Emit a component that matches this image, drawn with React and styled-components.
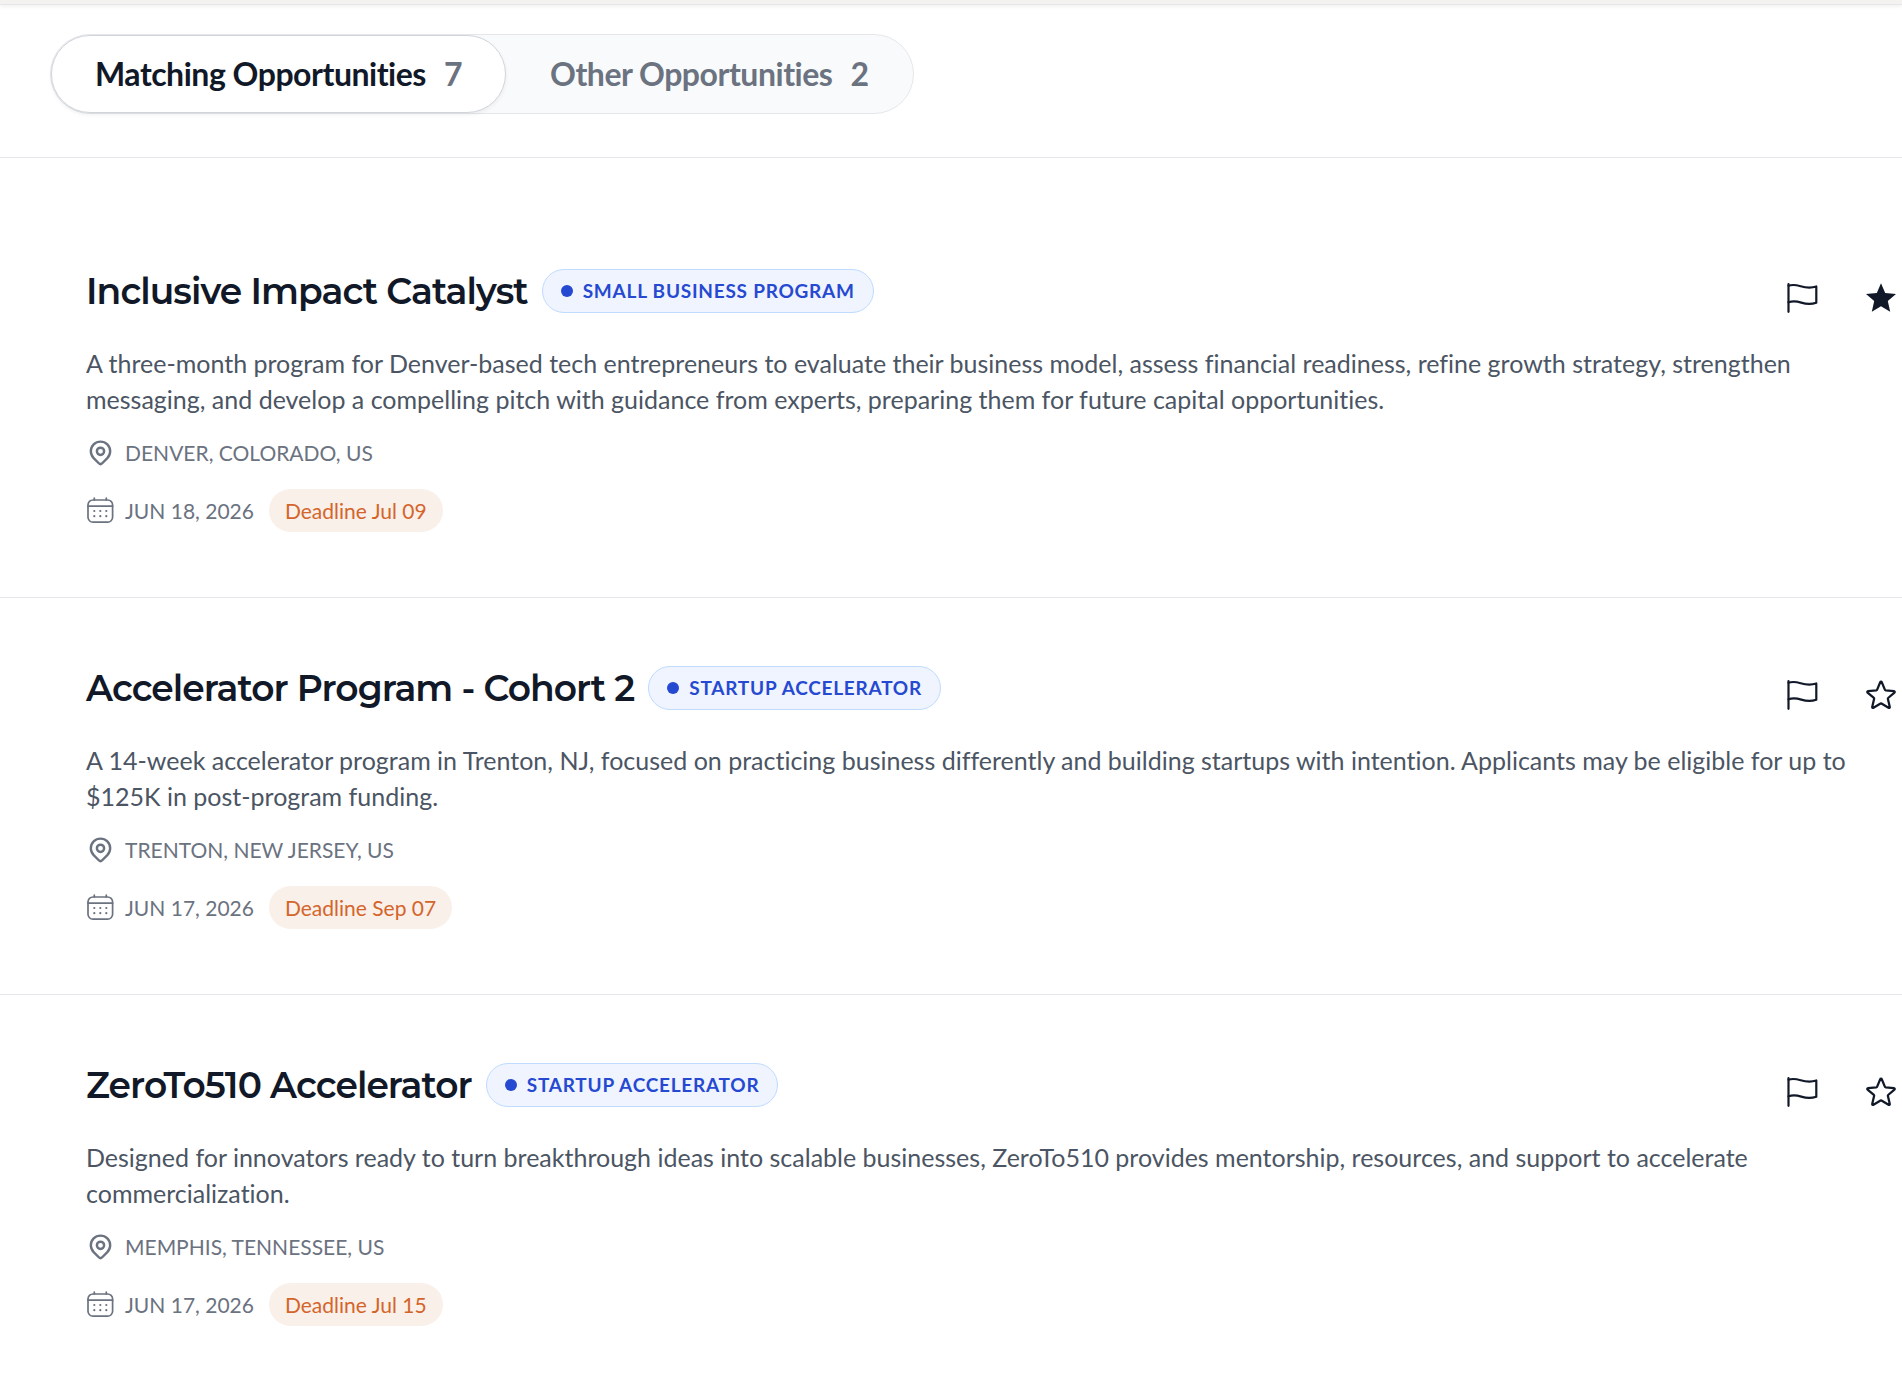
import React, { useState } from 'react';
import styled, { createGlobalStyle } from 'styled-components';

const GlobalStyle = createGlobalStyle`
  * {
    box-sizing: border-box;
  }

  body {
    margin: 0;
    background: #fff;
    color: #111827;
    font-family: Lato, 'Liberation Sans', sans-serif;
    font-variant-ligatures: no-common-ligatures;
  }
`;

const TopStrip = styled.div`
  height: 5px;
  background: #f3f2f1;
  border-bottom: 1px solid #e5e7eb;
  box-shadow: 0 1px 4px rgba(0, 0, 0, 0.08);
`;

const Header = styled.header`
  display: flex;
  padding: 29px 50px 43px;
  border-bottom: 1px solid #e5e7eb;
`;

const Tabs = styled.div`
  display: flex;
  height: 80px;
  border: 1px solid #e5e7eb;
  border-radius: 40px;
  background: #f9fafb;
`;

const Tab = styled.button`
  display: flex;
  align-items: center;
  gap: 18px;
  padding: 0 43px;
  border: 1px solid ${p => (p.$active ? '#d1d5db' : 'transparent')};
  border-radius: 40px;
  background: ${p => (p.$active ? '#fff' : 'transparent')};
  box-shadow: ${p => (p.$active ? '0 2px 4px rgba(0, 0, 0, 0.06)' : 'none')};
  color: ${p => (p.$active ? '#111827' : '#6b7280')};
  font: 700 32px/40px Lato, sans-serif;
  letter-spacing: -0.015em;
  cursor: pointer;
`;

const TabCount = styled.span`
  color: #6b7280;
`;

const List = styled.main`
  padding-top: 43px;
`;

const Card = styled.article`
  padding: 68px 0 65px 86px;
  border-bottom: 1px solid #e5e7eb;

  &:last-child {
    border-bottom: 0;
  }
`;

const CardHeader = styled.div`
  display: flex;
  align-items: center;
  height: 44px;
`;

const Title = styled.h2`
  margin: 0 14px 0 0;
  font: 600 36px/44px Montserrat, Inter, sans-serif;
  letter-spacing: -0.025em;
`;

const Badge = styled.span`
  display: flex;
  align-items: center;
  gap: 10px;
  height: 44px;
  padding: 0 18px;
  border: 1px solid #bfdbfe;
  border-radius: 22px;
  background: #eff4ff;
  color: #2649d1;
  font-size: 19px;
  font-weight: 700;
  line-height: 22px;
  letter-spacing: 0.04em;
  text-transform: uppercase;

  &::before {
    content: '';
    width: 12px;
    height: 12px;
    border-radius: 50%;
    background: currentColor;
  }
`;

const Actions = styled.div`
  display: flex;
  gap: 37px;
  margin-left: auto;
  padding-top: 14px;
`;

const IconButton = styled.button`
  display: grid;
  place-items: center;
  width: 42px;
  height: 42px;
  padding: 0;
  border: 0;
  background: none;
  color: #111827;
  cursor: pointer;
`;

const Description = styled.p`
  margin: 32px 0 15px;
  padding-right: 24px;
  color: #4b5563;
  font-size: 25px;
  line-height: 36px;
`;

const Meta = styled.div`
  display: flex;
  align-items: center;
  height: ${p => (p.$tall ? '43px' : '40px')};
  margin-top: ${p => (p.$tall ? '17px' : '0')};
  color: #6b7280;
  font-size: 21px;
  text-transform: uppercase;

  svg {
    margin-right: 10px;
  }
`;

const Deadline = styled.span`
  margin-left: 15px;
  padding: 0 16px;
  border-radius: 22px;
  background: #faf0ea;
  color: #d4652a;
  line-height: 43px;
  text-transform: none;
`;

const PinIcon = () => (
  <svg
    width="29"
    height="29"
    viewBox="0 0 24 24"
    fill="none"
    stroke="currentColor"
    strokeWidth="2"
    strokeLinecap="round"
    strokeLinejoin="round"
    aria-hidden="true"
  >
    <path d="M17.657 16.657 13.414 20.9a2 2 0 0 1-2.827 0l-4.244-4.243a8 8 0 1 1 11.314 0z" />
    <circle cx="12" cy="11" r="3" />
  </svg>
);

const CalendarIcon = () => (
  <svg
    width="29"
    height="29"
    viewBox="0 0 29 29"
    fill="none"
    stroke="currentColor"
    strokeWidth="1.7"
    strokeLinecap="round"
    aria-hidden="true"
  >
    <rect x="2" y="4" width="24.6" height="22.2" rx="5" />
    <path d="M2 10.2h24.6M8.3 2v2M20.3 2v2" />
    <path
      d="M8.3 15h.01M14.3 15h.01M20.3 15h.01M8.3 20.2h.01M14.3 20.2h.01M20.3 20.2h.01"
      strokeWidth="2.2"
    />
  </svg>
);

const FlagIcon = () => (
  <svg
    width="32"
    height="32"
    viewBox="0 0 32 32"
    fill="none"
    stroke="currentColor"
    strokeWidth="2.2"
    strokeLinecap="round"
    strokeLinejoin="round"
    aria-hidden="true"
  >
    <path d="M2.5 2v27.8" />
    <path d="M2.5 3.7C13 .3 17 8.8 30.3 4.5V20.7C17 25.2 14 16.5 2.5 20.3" />
  </svg>
);

const StarIcon = () => (
  <svg
    width="36"
    height="36"
    viewBox="0 0 24 24"
    fill="none"
    stroke="currentColor"
    strokeWidth="1.5"
    strokeLinecap="round"
    strokeLinejoin="round"
    aria-hidden="true"
  >
    <path d="M11.48 3.499a.562.562 0 0 1 1.04 0l2.125 5.111a.563.563 0 0 0 .475.345l5.518.442c.499.04.701.663.321.988l-4.204 3.602a.563.563 0 0 0-.182.557l1.285 5.385a.562.562 0 0 1-.84.61l-4.725-2.885a.562.562 0 0 0-.586 0L6.982 20.54a.562.562 0 0 1-.84-.61l1.285-5.386a.562.562 0 0 0-.182-.557l-4.204-3.602a.562.562 0 0 1 .321-.988l5.518-.442a.563.563 0 0 0 .475-.345L11.48 3.5Z" />
  </svg>
);

const StarFilledIcon = () => (
  <svg width="32" height="32" viewBox="0 0 32 32" fill="currentColor" aria-hidden="true">
    <path d="M16 1.3 20.2 10.9 31 12 22.8 19.1 25.2 29.8 16 24.2 6.8 29.8 9.2 19.1 1 12 11.8 10.9Z" />
  </svg>
);

const opportunities = [
  {
    title: 'Inclusive Impact Catalyst',
    type: 'Small Business Program',
    description:
      'A three-month program for Denver-based tech entrepreneurs to evaluate their business model, assess financial readiness, refine growth strategy, strengthen messaging, and develop a compelling pitch with guidance from experts, preparing them for future capital opportunities.',
    location: 'Denver, Colorado, US',
    date: 'Jun 18, 2026',
    deadline: 'Jul 09',
    starred: true,
  },
  {
    title: 'Accelerator Program - Cohort 2',
    type: 'Startup Accelerator',
    description:
      'A 14-week accelerator program in Trenton, NJ, focused on practicing business differently and building startups with intention. Applicants may be eligible for up to $125K in post-program funding.',
    location: 'Trenton, New Jersey, US',
    date: 'Jun 17, 2026',
    deadline: 'Sep 07',
  },
  {
    title: 'ZeroTo510 Accelerator',
    type: 'Startup Accelerator',
    description:
      'Designed for innovators ready to turn breakthrough ideas into scalable businesses, ZeroTo510 provides mentorship, resources, and support to accelerate commercialization.',
    location: 'Memphis, Tennessee, US',
    date: 'Jun 17, 2026',
    deadline: 'Jul 15',
  },
];

const Opportunity = ({ item }) => {
  const [starred, setStarred] = useState(Boolean(item.starred));

  return (
    <Card>
      <CardHeader>
        <Title>{item.title}</Title>
        <Badge>{item.type}</Badge>
        <Actions>
          <IconButton type="button" aria-label="Flag">
            <FlagIcon />
          </IconButton>
          <IconButton
            type="button"
            aria-label="Star"
            aria-pressed={starred}
            onClick={() => setStarred(!starred)}
          >
            {starred ? <StarFilledIcon /> : <StarIcon />}
          </IconButton>
        </Actions>
      </CardHeader>
      <Description>{item.description}</Description>
      <Meta>
        <PinIcon />
        {item.location}
      </Meta>
      <Meta $tall>
        <CalendarIcon />
        {item.date}
        <Deadline>Deadline {item.deadline}</Deadline>
      </Meta>
    </Card>
  );
};

const App = () => (
  <>
    <GlobalStyle />
    <TopStrip />
    <Header>
      <Tabs role="tablist">
        <Tab type="button" role="tab" aria-selected="true" $active>
          Matching Opportunities <TabCount>7</TabCount>
        </Tab>
        <Tab type="button" role="tab" aria-selected="false">
          Other Opportunities <TabCount>2</TabCount>
        </Tab>
      </Tabs>
    </Header>
    <List>
      {opportunities.map(item => (
        <Opportunity key={item.title} item={item} />
      ))}
    </List>
  </>
);

export default App;
